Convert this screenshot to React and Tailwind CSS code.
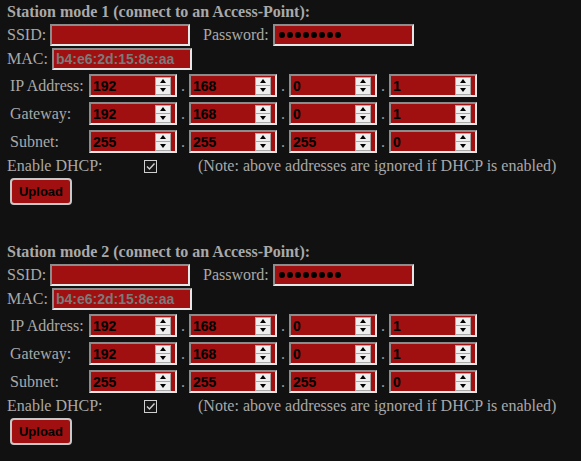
import React from "react"

const serif = { fontFamily: '"Liberation Serif", "Times New Roman", serif' }

const field =
  "h-full bg-[#a01010] border-2 border-t-[#8c8c8c] border-l-[#8c8c8c] border-b-[#e6e6e6] border-r-[#e6e6e6] flex items-center px-[2px] font-['Liberation_Sans',Arial,sans-serif] font-bold text-[14px]"

function Spinner() {
  return (
    <div className="ml-auto mr-[2px] w-[16px] h-[18px] flex flex-col border border-[#a8a8a8] bg-[#a8a8a8] gap-[1px]">
      <div className="flex-1 bg-[#efefef] flex items-center justify-center">
        <div className="w-0 h-0 border-l-[3px] border-r-[3px] border-b-[4px] border-l-transparent border-r-transparent border-b-black" />
      </div>
      <div className="flex-1 bg-[#efefef] flex items-center justify-center">
        <div className="w-0 h-0 border-l-[3px] border-r-[3px] border-t-[4px] border-l-transparent border-r-transparent border-t-black" />
      </div>
    </div>
  )
}

function NumBox({ value }) {
  return (
    <div className={`${field} w-[88px] text-black`}>
      <span className="leading-none">{value}</span>
      <Spinner />
    </div>
  )
}

function IpRow({ label, values }) {
  return (
    <div className="flex items-center h-[23px]">
      <span className="w-[82px] pl-[3px] leading-[18px]">{label}</span>
      {values.map((v, i) => (
        <React.Fragment key={i}>
          {i > 0 && <span className="w-[12px] text-center leading-[18px] text-[#9a9a9a]">.</span>}
          <NumBox value={v} />
        </React.Fragment>
      ))}
    </div>
  )
}

function Dots() {
  return (
    <div className="flex gap-[2px] pl-[2px]">
      {Array.from({ length: 8 }).map((_, i) => (
        <div key={i} className="w-[6px] h-[6px] rounded-full bg-black" />
      ))}
    </div>
  )
}

function Section({ n, last }) {
  return (
    <div className={`pt-[3px] ${last ? "" : "mb-[35px]"}`}>
      <div className="font-bold leading-[18px]">Station mode {n} (connect to an Access-Point):</div>
      <div className="flex items-center h-[22px] mt-[3px]">
        <span className="w-[43px] leading-[18px]">SSID:</span>
        <div className={`${field} w-[140px]`} />
        <span className="ml-[13px] w-[70px] leading-[18px]">Password:</span>
        <div className={`${field} w-[141px]`}>
          <Dots />
        </div>
      </div>
      <div className="flex items-center h-[22px] mt-[2px]">
        <span className="w-[45px] leading-[18px]">MAC:</span>
        <div className={`${field} w-[140px] text-[#7a7a7a]`}>
          <span className="leading-none">b4:e6:2d:15:8e:aa</span>
        </div>
      </div>
      <div className="flex flex-col gap-[5px] mt-[4px]">
        <IpRow label="IP Address:" values={["192", "168", "0", "1"]} />
        <IpRow label="Gateway:" values={["192", "168", "0", "1"]} />
        <IpRow label="Subnet:" values={["255", "255", "255", "0"]} />
      </div>
      <div className="flex items-center h-[18px] mt-[4px]">
        <span className="w-[137px] leading-[18px]">Enable DHCP:</span>
        <div className="w-[13px] h-[13px] border border-[#cfcfcf] bg-[#161616] flex items-center justify-center">
          <svg width="11" height="11" viewBox="0 0 11 11">
            <path d="M2 5.5 L4.5 8 L9.5 2.5" fill="none" stroke="#d0d0d0" strokeWidth="1.4" />
          </svg>
        </div>
        <span className="ml-[41px] leading-[18px]">(Note: above addresses are ignored if DHCP is enabled)</span>
      </div>
      <button className="mt-[3px] ml-[3px] w-[62px] h-[27px] rounded-[4px] border-2 border-[#c8c8c8] bg-[#a01010] text-black font-bold text-[13px] font-['Liberation_Sans',Arial,sans-serif] flex items-center justify-center">
        Upload
      </button>
    </div>
  )
}

export default function App() {
  return (
    <div className="w-[581px] h-[461px] bg-[#111111] text-[#a9a9a9] text-[16px] pl-[7px] overflow-hidden" style={serif}>
      <Section n={1} />
      <Section n={2} last />
    </div>
  )
}
